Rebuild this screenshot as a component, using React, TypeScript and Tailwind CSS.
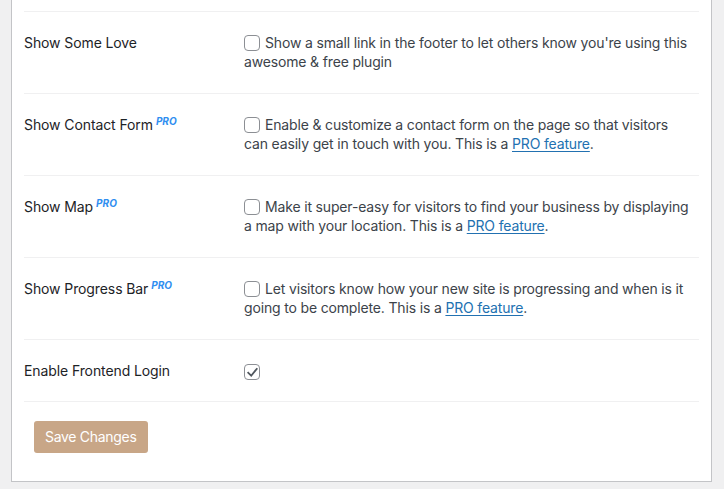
import React from "react";

const font = { fontFamily: "Inter, 'Noto Sans', sans-serif" };

function Box({ checked = false }: { checked?: boolean }) {
  return (
    <span className="inline-flex items-center justify-center w-[16px] h-[16px] border border-[#8c8f94] rounded-[4px] bg-white mr-[5px] align-[-3px] shrink-0">
      {checked && (
        <svg width="13" height="13" viewBox="0 0 20 20">
          <path d="M3.5 10.5 L8 15 L16.5 4.5" fill="none" stroke="#50575e" strokeWidth="2.8" strokeLinecap="square" />
        </svg>
      )}
    </span>
  );
}

function Pro() {
  return (
    <sup className="ml-[3px] text-[10px] font-bold italic text-[#2f8ef0] top-[-5px] relative align-baseline tracking-normal">PRO</sup>
  );
}

function Link({ children }: { children: React.ReactNode }) {
  return <a className="text-[#2271b1] underline underline-offset-[2px]">{children}</a>;
}

function Row({ label, pro, last, children }: { label: string; pro?: boolean; last?: boolean; children: React.ReactNode }) {
  return (
    <div
      className={
        "grid grid-cols-[220px_1fr] border-t border-[#f0f0f1] pt-[20.5px] text-[14px] leading-[19px] " +
        (last ? "pb-[20.5px]" : "pb-[22.5px]")
      }
    >
      <div className="text-[#1d2327] whitespace-nowrap tracking-[-0.1px]">
        {label}
        {pro && <Pro />}
      </div>
      <div className="text-[#3c434a] whitespace-nowrap tracking-[-0.16px]">{children}</div>
    </div>
  );
}

export default function App() {
  return (
    <div className="w-[724px] h-[489px] bg-[#f0f0f1] overflow-hidden pl-[11px] pr-[12px]" style={font}>
      <div className="bg-white border-x border-b border-[#c3c4c7] px-[12px] pb-[28px]">
        <div className="h-[11px]" />
        <Row label="Show Some Love">
          <Box />
          Show a small link in the footer to let others know you're using this
          <br />
          awesome &amp; free plugin
        </Row>
        <Row label="Show Contact Form" pro>
          <Box />
          Enable &amp; customize a contact form on the page so that visitors
          <br />
          can easily get in touch with you. This is a <Link>PRO feature</Link>.
        </Row>
        <Row label="Show Map" pro>
          <Box />
          Make it super-easy for visitors to find your business by displaying
          <br />
          a map with your location. This is a <Link>PRO feature</Link>.
        </Row>
        <Row label="Show Progress Bar" pro>
          <Box />
          Let visitors know how your new site is progressing and when is it
          <br />
          going to be complete. This is a <Link>PRO feature</Link>.
        </Row>
        <Row label="Enable Frontend Login" last>
          <Box checked />
        </Row>
        <div className="border-t border-[#f0f0f1] pt-[19px] pl-[10px]">
          <button className="h-[32px] px-[11px] rounded-[3px] bg-[#c8a687] text-white text-[14px] leading-[20px] tracking-[-0.3px]">
            Save Changes
          </button>
        </div>
      </div>
    </div>
  );
}
